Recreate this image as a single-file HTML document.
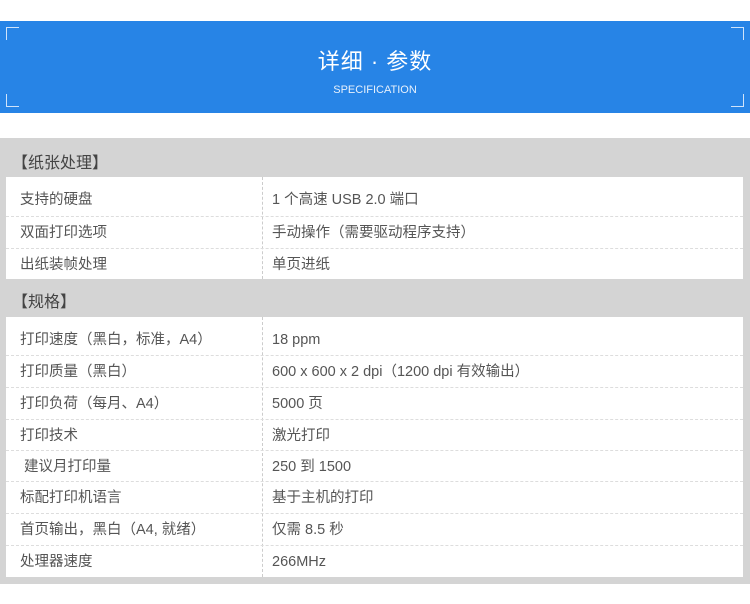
<!DOCTYPE html>
<html><head><meta charset="utf-8"><style>
body{margin:0;width:750px;height:604px;background:#fff;position:relative;overflow:hidden;font-family:"Liberation Sans","Noto Sans CJK SC",sans-serif;}
.banner{position:absolute;left:0;top:21px;width:750px;height:92px;background:#2784e6;}
.c{position:absolute;width:12px;height:12px;border-color:#cfe3fa;border-style:solid;border-width:0}
.t1{position:absolute;left:0;width:750px;top:44px;text-align:center;color:#fff;font-size:22px;letter-spacing:1px}
.t2{position:absolute;left:0;width:750px;top:84px;text-align:center;color:#e6f0fc;font-size:11px}
.gray{position:absolute;left:0;top:138px;width:750px;height:446px;background:#d4d4d4;}
.h{position:absolute;left:12px;font-size:16px;color:#444}
.w{position:absolute;left:6px;width:737px;background:#fff}
.r{position:absolute;left:6px;width:737px;height:32px;font-size:14.5px;color:#555;line-height:32px;border-top:1px dashed #ddd;box-sizing:border-box}
.r span{position:absolute;left:14px}
.r b{font-weight:normal;position:absolute;left:266px}
.v{position:absolute;left:262px;border-left:1px dashed #ccc}
</style></head><body>
<div class="banner">
<div class="c" style="left:6px;top:6px;border-left-width:1px;border-top-width:1px"></div>
<div class="c" style="right:6px;top:6px;border-right-width:1px;border-top-width:1px"></div>
<div class="c" style="left:6px;bottom:6px;border-left-width:1px;border-bottom-width:1px"></div>
<div class="c" style="right:6px;bottom:6px;border-right-width:1px;border-bottom-width:1px"></div>
</div>
<div class="t1">详细 · 参数</div>
<div class="t2">SPECIFICATION</div>
<div class="gray"></div>
<div class="h" style="top:149px">【纸张处理】</div>
<div class="w" style="top:177px;height:102px"></div>
<div class="v" style="top:177px;height:102px"></div>
<div class="r" style="top:184px;border-top:none"><span>支持的硬盘</span><b>1 个高速 USB 2.0 端口</b></div>
<div class="r" style="top:216px"><span>双面打印选项</span><b>手动操作（需要驱动程序支持）</b></div>
<div class="r" style="top:248px"><span>出纸装帧处理</span><b>单页进纸</b></div>
<div class="h" style="top:288px">【规格】</div>
<div class="w" style="top:317px;height:260px"></div>
<div class="v" style="top:317px;height:260px"></div>
<div class="r" style="top:324px;border-top:none"><span>打印速度（黑白，标准，A4）</span><b>18 ppm</b></div>
<div class="r" style="top:355px"><span>打印质量（黑白）</span><b>600 x 600 x 2 dpi（1200 dpi 有效输出）</b></div>
<div class="r" style="top:387px"><span>打印负荷（每月、A4）</span><b>5000 页</b></div>
<div class="r" style="top:419px"><span>打印技术</span><b>激光打印</b></div>
<div class="r" style="top:450px"><span>&nbsp;建议月打印量</span><b>250 到 1500</b></div>
<div class="r" style="top:481px"><span>标配打印机语言</span><b>基于主机的打印</b></div>
<div class="r" style="top:513px"><span>首页输出，黑白（A4, 就绪）</span><b>仅需 8.5 秒</b></div>
<div class="r" style="top:545px"><span>处理器速度</span><b>266MHz</b></div>
</body></html>
